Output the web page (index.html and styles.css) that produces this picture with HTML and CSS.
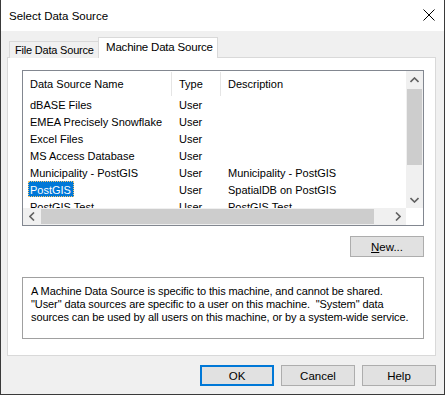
FILE: index.html
```html
<!DOCTYPE html>
<html lang="en">
<head>
    <meta charset="UTF-8">
    <title>Select Data Source</title>
    <link rel="stylesheet" href="styles.css">
</head>
<body>
    <div class="window">
        <div class="titlebar">
            <span class="title">Select Data Source</span>
            <svg class="close" width="12" height="12" viewBox="0 0 12 12">
                <path d="M0.5 0.5 L11.5 11.5 M11.5 0.5 L0.5 11.5" stroke="#000" stroke-width="1" fill="none"/>
            </svg>
        </div>
        <div class="client">
            <div class="tabs">
                <div class="tab">File Data Source</div>
                <div class="tab active">Machine Data Source</div>
            </div>
            <div class="panel">
                <div class="listbox">
                    <div class="list-main">
                        <div class="list-view">
                            <div class="list-head">
                                <div class="col c-name">Data Source Name</div>
                                <div class="col c-type">Type</div>
                                <div class="col c-desc">Description</div>
                            </div>
                            <div class="list-row">
                                <div class="col c-name"><span>dBASE Files</span></div>
                                <div class="col c-type">User</div>
                                <div class="col c-desc"></div>
                            </div>
                            <div class="list-row">
                                <div class="col c-name"><span>EMEA Precisely Snowflake</span></div>
                                <div class="col c-type">User</div>
                                <div class="col c-desc"></div>
                            </div>
                            <div class="list-row">
                                <div class="col c-name"><span>Excel Files</span></div>
                                <div class="col c-type">User</div>
                                <div class="col c-desc"></div>
                            </div>
                            <div class="list-row">
                                <div class="col c-name"><span>MS Access Database</span></div>
                                <div class="col c-type">User</div>
                                <div class="col c-desc"></div>
                            </div>
                            <div class="list-row">
                                <div class="col c-name"><span>Municipality - PostGIS</span></div>
                                <div class="col c-type">User</div>
                                <div class="col c-desc">Municipality - PostGIS</div>
                            </div>
                            <div class="list-row">
                                <div class="col c-name"><span class="selected">PostGIS</span></div>
                                <div class="col c-type">User</div>
                                <div class="col c-desc">SpatialDB on PostGIS</div>
                            </div>
                            <div class="list-row">
                                <div class="col c-name"><span>PostGIS Test</span></div>
                                <div class="col c-type">User</div>
                                <div class="col c-desc">PostGIS Test</div>
                            </div>
                        </div>
                        <div class="vscroll">
                            <div class="arrow">
                                <svg width="9" height="6" viewBox="0 0 9 6"><path d="M0.5 5 L4.5 1 L8.5 5" stroke="#606060" stroke-width="1.6" fill="none"/></svg>
                            </div>
                            <div class="v-track"><div class="v-thumb"></div></div>
                            <div class="arrow">
                                <svg width="9" height="6" viewBox="0 0 9 6"><path d="M0.5 1 L4.5 5 L8.5 1" stroke="#606060" stroke-width="1.6" fill="none"/></svg>
                            </div>
                        </div>
                    </div>
                    <div class="hscroll-row">
                        <div class="hscroll">
                            <div class="arrow">
                                <svg width="6" height="9" viewBox="0 0 6 9"><path d="M5 0.5 L1 4.5 L5 8.5" stroke="#606060" stroke-width="1.6" fill="none"/></svg>
                            </div>
                            <div class="h-track"><div class="h-thumb"></div></div>
                            <div class="arrow">
                                <svg width="6" height="9" viewBox="0 0 6 9"><path d="M1 0.5 L5 4.5 L1 8.5" stroke="#606060" stroke-width="1.6" fill="none"/></svg>
                            </div>
                        </div>
                        <div class="corner"></div>
                    </div>
                </div>
                <div class="new-row">
                    <button class="btn"><u>N</u>ew...</button>
                </div>
                <div class="note">
                    A Machine Data Source is specific to this machine, and cannot be shared.<br>
                    "User" data sources are specific to a user on this machine.&nbsp; "System" data<br>
                    sources can be used by all users on this machine, or by a system-wide service.
                </div>
            </div>
            <div class="actions">
                <button class="btn default">OK</button>
                <button class="btn">Cancel</button>
                <button class="btn">Help</button>
            </div>
        </div>
    </div>
</body>
</html>
```

FILE: styles.css
```css
body {
    margin: 0;
    padding: 0;
    font-family: 'Liberation Sans', Arial, sans-serif;
    color: #000;
    background-color: #f0f0f0;
}
.window {
    width: 445px;
    height: 395px;
    box-sizing: border-box;
    border-left: 1px solid #3a3a3a;
    border-right: 1px solid #3a3a3a;
    border-bottom: 1px solid #3a3a3a;
    display: flex;
    flex-direction: column;
    overflow: hidden;
}
.titlebar {
    height: 31px;
    flex: none;
    background-color: #fff;
    display: flex;
    align-items: center;
    justify-content: space-between;
    padding: 0 9px 0 8px;
}
.title {
    font-size: 11.5px;
}
.close {
    display: block;
    margin-top: -1px;
}
.client {
    flex: 1;
    background-color: #f0f0f0;
    padding: 7px 8px 0 6px;
    display: flex;
    flex-direction: column;
}

/* tabs */
.tabs {
    display: flex;
    align-items: flex-end;
    height: 20px;
    padding-left: 2px;
    position: relative;
    z-index: 1;
    margin-bottom: -1px;
}
.tab {
    font-size: 11px;
    letter-spacing: -0.2px;
    white-space: nowrap;
    height: 16px;
    line-height: 17px;
    box-sizing: content-box;
    width: 83px;
    padding: 0 0 0 5px;
    border: 1px solid #d9d9d9;
    border-bottom: none;
    border-right: none;
    background-color: #f0f0f0;
}
.tab.active {
    font-size: 11.5px;
    height: 20px;
    line-height: 19px;
    width: 111px;
    padding: 0 0 0 7px;
    border-right: 1px solid #d9d9d9;
    background-color: #fff;
}
.panel {
    height: 299px;
    box-sizing: border-box;
    background-color: #fff;
    border: 1px solid #d9d9d9;
    padding: 12px 11px 0 14px;
}

/* list view */
.listbox {
    height: 156px;
    box-sizing: border-box;
    border: 1px solid #828790;
    display: flex;
    flex-direction: column;
    font-size: 11px;
}
.list-main {
    height: 137px;
    display: flex;
}
.list-view {
    flex: 1;
    overflow: hidden;
}
.list-head {
    display: flex;
    height: 25px;
    padding-top: 1px;
    box-sizing: border-box;
}
.list-head .col {
    height: 24px;
    line-height: 24px;
    box-sizing: border-box;
}
.list-head .c-name,
.list-head .c-type {
    border-right: 1px solid #e5e5e5;
}
.list-row {
    display: flex;
    height: 17px;
    line-height: 18px;
}
.col {
    padding-left: 7px;
    white-space: nowrap;
}
.c-name {
    width: 149px;
    box-sizing: border-box;
}
.c-type {
    width: 49px;
    box-sizing: border-box;
}
.list-row .c-name span {
    display: inline-block;
    vertical-align: top;
    height: 16px;
    line-height: 18px;
    margin-left: -2px;
    padding: 0 2px;
}
.list-row .c-name .selected {
    background-color: #0078d7;
    color: #fff;
    outline: 1px dotted #f8c870;
    outline-offset: -1px;
    padding: 0 3px 0 2px;
}

/* scroll bars */
.vscroll {
    width: 17px;
    background-color: #f0f0f0;
    display: flex;
    flex-direction: column;
}
.vscroll .arrow {
    height: 17px;
}
.arrow {
    display: flex;
    align-items: center;
    justify-content: center;
    flex: none;
}
.v-track {
    flex: 1;
}
.v-thumb {
    margin: 1px 1px 0 1px;
    height: 76px;
    background-color: #cdcdcd;
}
.hscroll-row {
    height: 17px;
    display: flex;
}
.hscroll {
    flex: 1;
    display: flex;
    background-color: #f0f0f0;
}
.hscroll .arrow {
    width: 17px;
}
.h-track {
    flex: 1;
    display: flex;
    align-items: center;
}
.h-thumb {
    height: 15px;
    width: 333px;
    margin-left: 1px;
    background-color: #cdcdcd;
}
.corner {
    width: 17px;
    background-color: #fff;
}

/* buttons */
.btn {
    font-family: 'Liberation Sans', Arial, sans-serif;
    font-size: 11.5px;
    color: #000;
    width: 74px;
    height: 21px;
    padding: 0;
    background-color: #e1e1e1;
    border: 1px solid #adadad;
    border-radius: 0;
}
.btn.default {
    border: 2px solid #0078d7;
}
.new-row {
    display: flex;
    justify-content: flex-end;
    margin-top: 10px;
}
.note {
    margin-top: 20px;
    height: 62px;
    box-sizing: border-box;
    border: 1px solid #a0a0a0;
    padding: 7px 4px 0 8px;
    font-size: 11px;
    line-height: 13px;
    white-space: nowrap;
    letter-spacing: -0.1px;
}
.actions {
    display: flex;
    justify-content: flex-end;
    gap: 7px;
    margin-top: 9px;
}
```
